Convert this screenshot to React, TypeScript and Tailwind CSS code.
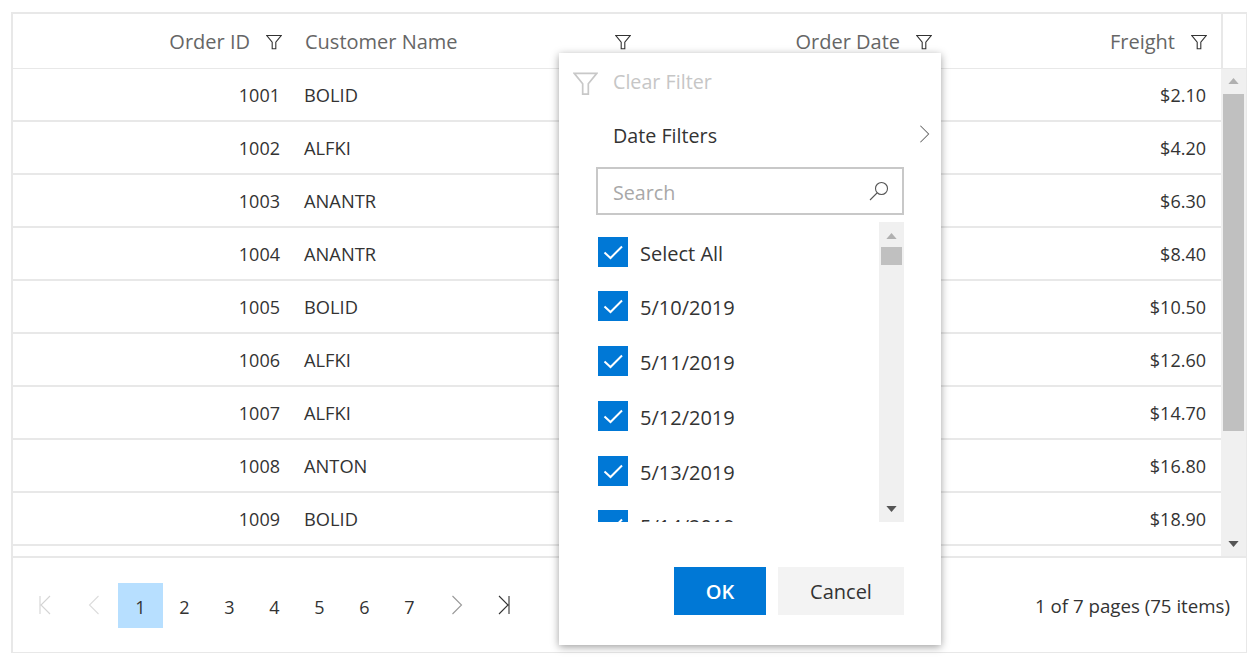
import React from "react";

const rows = [
  ["1001", "BOLID", "$2.10"],
  ["1002", "ALFKI", "$4.20"],
  ["1003", "ANANTR", "$6.30"],
  ["1004", "ANANTR", "$8.40"],
  ["1005", "BOLID", "$10.50"],
  ["1006", "ALFKI", "$12.60"],
  ["1007", "ALFKI", "$14.70"],
  ["1008", "ANTON", "$16.80"],
  ["1009", "BOLID", "$18.90"],
];

const dates = ["Select All", "5/10/2019", "5/11/2019", "5/12/2019", "5/13/2019", "5/14/2019"];

const FilterIcon = ({ className = "w-4 h-4 text-[#333]" }: { className?: string }) => (
  <svg viewBox="0 0 16 16" className={className} fill="none" stroke="currentColor" strokeWidth="1.1">
    <path d="M0.8 1.5H15.2L9.8 8.2V14.8H6.2V8.2Z" />
  </svg>
);

const Check = () => (
  <svg viewBox="0 0 30 30" className="w-[30px] h-[30px]" fill="none" stroke="white" strokeWidth="2">
    <path d="M6.5 15.5L12.5 21L24 9.5" />
  </svg>
);

const Arrow = ({ up, className }: { up?: boolean; className: string }) => (
  <svg viewBox="0 0 12 7" className={className}>
    <path d={up ? "M6 0L12 7H0Z" : "M0 0H12L6 7Z"} fill="currentColor" />
  </svg>
);

const Chevron = ({ left, className }: { left?: boolean; className: string }) => (
  <svg viewBox="0 0 12 20" className={className} fill="none" stroke="currentColor" strokeWidth="1.1">
    <path d={left ? "M10.5 1L1.5 10L10.5 19" : "M1.5 1L10.5 10L1.5 19"} />
  </svg>
);

const Pager = () => (
  <div className="flex items-center pl-[25px] text-[18px] text-[#333]">
    <div className="w-[40px] flex justify-start pl-[1px] text-[#d4d4d4]">
      <svg viewBox="0 0 12 20" className="w-[12px] h-[20px]" fill="none" stroke="currentColor" strokeWidth="1.1">
        <path d="M1 1V19M11 1L2 10L11 19" />
      </svg>
    </div>
    <div className="w-[40px] flex justify-start pl-[10px] text-[#dcdcdc]">
      <Chevron left className="w-[12px] h-[20px]" />
    </div>
    {["1", "2", "3", "4", "5", "6", "7"].map((n, i) => (
      <div
        key={n}
        className={`w-[45px] h-[45px] flex items-center justify-center pt-[4px] ${i === 0 ? "bg-[#b7dfff]" : "pr-[2px]"}`}
      >
        {n}
      </div>
    ))}
    <div className="w-[47px] flex justify-center text-[#999]">
      <Chevron className="w-[12px] h-[20px]" />
    </div>
    <div className="w-[48px] flex justify-center text-[#333]">
      <svg viewBox="0 0 12 20" className="w-[12px] h-[20px]" fill="none" stroke="currentColor" strokeWidth="1.1">
        <path d="M11 1V19M1 1L10 10L1 19" />
      </svg>
    </div>
  </div>
);

const FilterPopup = () => (
  <div className="absolute left-[559px] top-[53px] w-[382px] h-[592px] bg-white shadow-[0_2px_8px_rgba(0,0,0,0.38)] flex flex-col">
    <div className="h-[56px] flex items-center pl-[14px] text-[#c6c6c6] text-[19.7px]">
      <FilterIcon className="w-[25px] h-[25px] text-[#c8c8c8] mt-[4px]" />
      <span className="ml-[15px] mt-[2px]">Clear Filter</span>
    </div>
    <div className="h-[52px] flex items-center pl-[54px] pr-[11px] justify-between text-[19.7px] text-[#333]">
      <span className="mt-[2px]">Date Filters</span>
      <Chevron className="w-[11px] h-[20px] text-[#666] -mt-[2px]" />
    </div>
    <div className="ml-[37px] mt-[6px] w-[308px] h-[48px] border-2 border-[#c8c8c8] flex items-center justify-between pl-[15px] pr-[13px] text-[19.7px] text-[#a8a8a8]">
      <span className="mt-[4px]">Search</span>
      <svg viewBox="0 0 20 20" className="w-[20px] h-[20px] text-[#555]" fill="none" stroke="currentColor" strokeWidth="1.1">
        <circle cx="12.5" cy="7.5" r="6" />
        <path d="M8 12L1 19" />
      </svg>
    </div>
    <div className="ml-[38px] mt-[7px] w-[307px] h-[300px] flex overflow-hidden">
      <div className="w-[282px] h-[300px] overflow-hidden pt-[15px]">
        {dates.map((d, i) => (
          <div key={d} className={`flex items-start text-[20px] text-[#333] ${i === 0 || i === 4 ? "h-[54px]" : "h-[55px]"}`}>
            <div className="w-[30px] h-[30px] bg-[#0078d6] shrink-0 ml-[1px]">
              <Check />
            </div>
            <span className="ml-[12px] leading-[34px]">{d}</span>
          </div>
        ))}
      </div>
      <div className="w-[25px] h-[300px] bg-[#f0f0f0] flex flex-col items-center">
        <Arrow up className="w-[11px] h-[6px] mt-[11px] text-[#b0b0b0]" />
        <div className="w-[21px] h-[18px] bg-[#c0c0c0] mt-[8px]" />
        <div className="flex-1" />
        <Arrow className="w-[11px] h-[6px] mb-[10px] text-[#555]" />
      </div>
    </div>
    <div className="ml-[115px] mt-[45px] flex gap-[12px] text-[20px]">
      <div className="w-[92px] h-[48px] bg-[#0078d6] text-white font-semibold flex items-center justify-center pt-[2px]">OK</div>
      <div className="w-[126px] h-[48px] bg-[#f3f3f3] text-[#333] font-medium flex items-center justify-center pt-[2px]">Cancel</div>
    </div>
  </div>
);

export default function App() {
  return (
    <div className="relative w-[1257px] h-[664px] bg-white overflow-hidden font-['Open_Sans','Noto_Sans',sans-serif] pt-[12px] pl-[11px]">
      <div className="w-[1236px] h-[641px] border-t-2 border-l-2 border-r border-b border-[#e8e8e8] flex flex-col">
        <div className="h-[55px] flex border-b border-[#e8e8e8] text-[#666] text-[20px] shrink-0">
          <div className="w-[1208px] flex items-center pt-[1px]">
            <div className="w-[279px] flex items-center justify-end pr-[10px] gap-[16px]">
              <span>Order ID</span>
              <FilterIcon />
            </div>
            <div className="w-[341px] flex items-center justify-between pl-[13px] pr-[2px]">
              <span>Customer Name</span>
              <FilterIcon />
            </div>
            <div className="w-[309px] flex items-center justify-end gap-[16px] pr-[10px]">
              <span>Order Date</span>
              <FilterIcon />
            </div>
            <div className="w-[279px] flex items-center justify-end gap-[16px] pr-[14px]">
              <span>Freight</span>
              <FilterIcon />
            </div>
          </div>
          <div className="w-[25px] border-l-2 border-[#e8e8e8]" />
        </div>
        <div className="h-[489px] flex border-b-2 border-[#e8e8e8] shrink-0">
          <div className="w-[1208px] text-[18px] text-[#333]">
            {rows.map(([id, name, freight]) => (
              <div key={id} className="h-[53px] flex items-center border-b-2 border-[#e8e8e8] pt-[2px]">
                <div className="w-[267px] text-right">{id}</div>
                <div className="ml-[24px] flex-1 text-[18.3px] -mt-[1px]">{name}</div>
                <div className="pr-[15px]">{freight}</div>
              </div>
            ))}
          </div>
          <div className="w-[25px] bg-[#f0f0f0] flex flex-col items-center">
            <Arrow up className="w-[11px] h-[6px] mt-[9px] text-[#b0b0b0]" />
            <div className="w-[21px] h-[337px] bg-[#c0c0c0] mt-[10px]" />
            <div className="flex-1" />
            <Arrow className="w-[11px] h-[6px] mb-[9px] text-[#555]" />
          </div>
        </div>
        <div className="flex-1 flex items-center justify-between pr-[16px]">
          <Pager />
          <span className="text-[18.7px] text-[#333] mt-[2px]">1 of 7 pages (75 items)</span>
        </div>
      </div>
      <FilterPopup />
    </div>
  );
}
